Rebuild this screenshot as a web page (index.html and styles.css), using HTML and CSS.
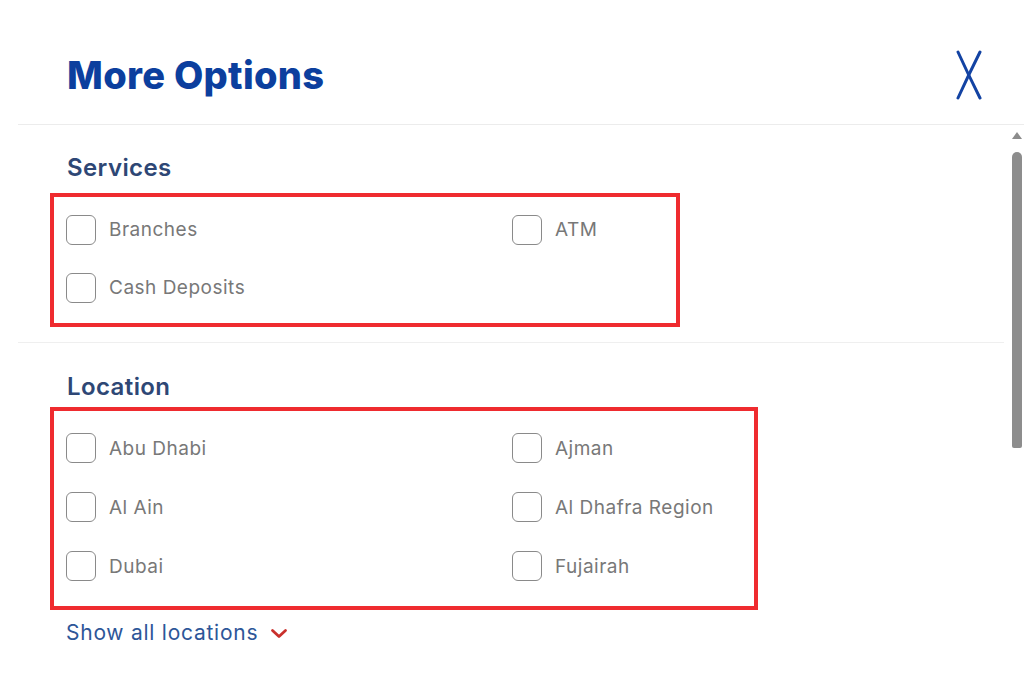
FILE: index.html
```html
<!DOCTYPE html>
<html>
<head>
<meta charset="utf-8">
<link rel="stylesheet" href="styles.css">
</head>
<body>
<div class="panel">
  <header class="header">
    <h1 class="title">More Options</h1>
    <button class="close" aria-label="Close">
      <svg width="28" height="50" viewBox="0 0 28 50">
        <path d="M3 2 Q13 24 25 48" fill="none" stroke="#1343a3" stroke-width="3" stroke-linecap="round"/>
        <path d="M25 2 Q14 24 3 48" fill="none" stroke="#1343a3" stroke-width="3" stroke-linecap="round"/>
      </svg>
    </button>
  </header>
  <div class="body">
    <div class="content">
      <section class="section section-services">
        <h2 class="heading">Services</h2>
        <div class="box box-services">
          <label class="opt"><span class="check"></span><span class="lbl">Branches</span></label>
          <label class="opt"><span class="check"></span><span class="lbl">ATM</span></label>
          <label class="opt"><span class="check"></span><span class="lbl">Cash Deposits</span></label>
        </div>
      </section>
      <section class="section section-location">
        <h2 class="heading">Location</h2>
        <div class="box box-location">
          <label class="opt"><span class="check"></span><span class="lbl">Abu Dhabi</span></label>
          <label class="opt"><span class="check"></span><span class="lbl">Ajman</span></label>
          <label class="opt"><span class="check"></span><span class="lbl">Al Ain</span></label>
          <label class="opt"><span class="check"></span><span class="lbl">Al Dhafra Region</span></label>
          <label class="opt"><span class="check"></span><span class="lbl">Dubai</span></label>
          <label class="opt"><span class="check"></span><span class="lbl">Fujairah</span></label>
        </div>
        <a class="show-all" href="#">Show all locations
          <svg class="chev" width="18" height="11" viewBox="0 0 18 11">
            <path d="M2.5 2.5 L9 8.5 L15.5 2.5" fill="none" stroke="#c9302c" stroke-width="2.8" stroke-linecap="round" stroke-linejoin="round"/>
          </svg>
        </a>
      </section>
    </div>
    <div class="scrollbar">
      <span class="arrow"></span>
      <span class="thumb"></span>
    </div>
  </div>
</div>
</body>
</html>
```
FILE: styles.css
```css
* { box-sizing: border-box; }
html, body { margin: 0; padding: 0; background: #fff; }
body {
  font-family: Inter, Lato, "Liberation Sans", sans-serif;
  width: 1024px;
  height: 699px;
  overflow: hidden;
}
.panel { padding-left: 18px; }
.header {
  height: 125px;
  border-bottom: 1px solid #ececec;
  display: flex;
  align-items: center;
  justify-content: space-between;
  padding-left: 49px;
  padding-right: 41px;
  padding-top: 26px;
}
.title {
  margin: 0;
  font-size: 38px;
  font-weight: 800;
  color: #0c3f9e;
  letter-spacing: 0.3px;
}
.close {
  background: none;
  border: 0;
  padding: 0;
  display: flex;
  margin-top: -1px;
}
.body { display: flex; }
.content { flex: 1; }
.section { padding-left: 32px; }
.section-services {
  padding-top: 28px;
  padding-bottom: 15px;
  border-bottom: 1px solid #efefef;
  margin-right: 2px;
}
.section-location { padding-top: 29px; }
.heading {
  margin: 0 0 0 17px;
  font-size: 24px;
  line-height: 30px;
  font-weight: 600;
  color: #2e4775;
  letter-spacing: 0.4px;
}
.box {
  border: 4px solid #ef2b2f;
  display: grid;
  grid-template-columns: 446px 1fr;
  padding-left: 12px;
}
.box-services {
  width: 630px;
  margin-top: 10px;
  padding-top: 18px;
  padding-bottom: 20px;
  row-gap: 28px;
}
.box-location {
  width: 708px;
  margin-top: 5px;
  padding-top: 22px;
  padding-bottom: 25px;
  row-gap: 29px;
}
.box-location .lbl { margin-top: 0; }
.opt {
  display: flex;
  align-items: center;
  height: 30px;
}
.check {
  width: 30px;
  height: 30px;
  border: 1.5px solid #8a8a8a;
  border-radius: 6px;
  flex: none;
}
.lbl {
  margin-left: 13px;
  font-size: 19px;
  color: #787878;
  margin-top: -2px;
  letter-spacing: 0.5px;
}
.show-all {
  display: inline-flex;
  align-items: center;
  margin: 10px 0 0 16px;
  font-size: 21px;
  color: #2d5698;
  text-decoration: none;
  letter-spacing: 0.75px;
}
.chev { margin-left: 12px; margin-top: 2px; }
.scrollbar {
  width: 18px;
  display: flex;
  flex-direction: column;
  align-items: center;
  padding-top: 7px;
  padding-left: 4px;
}
.arrow {
  width: 0;
  height: 0;
  border-left: 5px solid transparent;
  border-right: 5px solid transparent;
  border-bottom: 7px solid #8c8c8c;
}
.thumb {
  margin-top: 13px;
  width: 10px;
  height: 296px;
  background: #8d8d8d;
  border-radius: 5px 5px 2px 2px;
}
```
